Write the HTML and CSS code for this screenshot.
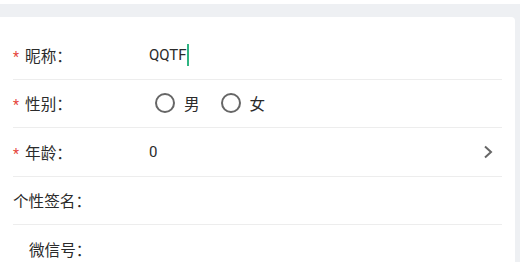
FILE: index.html
```html
<!DOCTYPE html>
<html lang="zh-CN">
<head>
<meta charset="utf-8">
<title>编辑资料</title>
<link rel="stylesheet" href="styles.css">
</head>
<body>
<div class="page">
  <div class="card">
    <div class="row">
      <div class="label"><span class="req">*</span>昵称：</div>
      <div class="value">QQTF<span class="cursor"></span></div>
    </div>
    <div class="row">
      <div class="label"><span class="req">*</span>性别：</div>
      <div class="value radios">
        <span class="radio"><span class="circle"></span>男</span>
        <span class="radio"><span class="circle"></span>女</span>
      </div>
    </div>
    <div class="row">
      <div class="label"><span class="req">*</span>年龄：</div>
      <div class="value grow">0</div>
      <svg class="chev" width="10" height="14" viewBox="0 0 10 14"><polyline points="2,1.5 8,7 2,12.5" fill="none" stroke="#666" stroke-width="2"/></svg>
    </div>
    <div class="row">
      <div class="label">个性签名：</div>
    </div>
    <div class="row last">
      <div class="label indent">微信号：</div>
    </div>
  </div>
</div>
</body>
</html>
```
FILE: styles.css
```css
html, body {
  margin: 0;
  padding: 0;
  background: #ffffff;
}
body {
  font-family: Roboto, "Noto Sans CJK SC", sans-serif;
  font-size: 15px;
  color: #2b2b2b;
}
.page {
  margin-top: 4px;
  background: #eef0f3;
  padding: 13px 5px 0 0;
  height: 245px;
}
.card {
  background: #ffffff;
  border-top-right-radius: 4px;
  padding-top: 14px;
  height: 231px;
}
.row {
  margin: 0 13px;
  height: 48.5px;
  box-sizing: border-box;
  border-bottom: 1px solid #ededed;
  display: flex;
  align-items: center;
}
.row.last {
  border-bottom: none;
}
.label {
  width: 136px;
  flex: none;
  white-space: nowrap;
  font-size: 15.6px;
}
.label.indent {
  padding-left: 16px;
  box-sizing: border-box;
}
.req {
  color: #e5463c;
  margin-right: 6px;
  font-size: 14px;
}
.value {
  display: flex;
  align-items: center;
}
.grow {
  flex: 1;
}
.cursor {
  display: inline-block;
  width: 2px;
  height: 22px;
  background: #2fb482;
}
.radios {
  gap: 21px;
  padding-left: 6px;
  font-size: 15.6px;
}
.radio {
  display: flex;
  align-items: center;
}
.circle {
  width: 16px;
  height: 16px;
  border: 2px solid #666666;
  border-radius: 50%;
  margin-right: 9px;
}
.chev {
  margin-right: 9px;
}
```
